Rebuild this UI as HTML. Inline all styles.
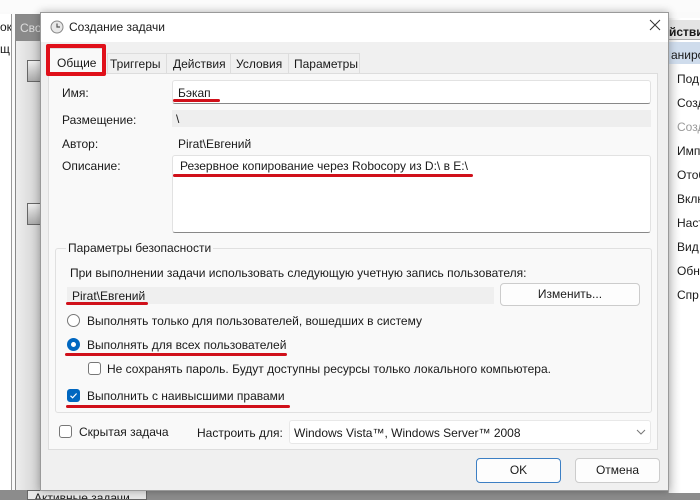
<!DOCTYPE html>
<html><head><meta charset="utf-8"><style>
*{margin:0;padding:0;box-sizing:border-box}
body{width:700px;height:500px;overflow:hidden;background:#fafafa;font-family:"Liberation Sans",sans-serif;font-size:12px;color:#1a1a1a;position:relative}
.a{position:absolute}
.t{position:absolute;white-space:nowrap;line-height:14px}
.red{position:absolute;height:3px;background:#d0101a;border-radius:2px}
.cb{position:absolute;width:13px;height:13px;border:1px solid #777;border-radius:3px;background:#fff}
.rb{position:absolute;width:13px;height:13px;border:1px solid #777;border-radius:50%;background:#fff}
.btn{position:absolute;background:#fdfdfd;border:1px solid #ccc;border-radius:4px;text-align:center}
</style></head><body>
<div class="a" style="left:0;top:0;width:700px;height:12px;background:#fbfbfb"></div>
<div class="a" style="left:0;top:14px;width:12px;height:486px;background:#fff;border-right:1px solid #999;overflow:hidden">
<div class="t" style="left:0;top:6px">ок</div>
<div class="t" style="left:0;top:28px">щ</div>
</div>
<div class="a" style="left:15px;top:14px;width:30px;height:486px;background:linear-gradient(90deg,#eee,#ccc);border:1px solid #888;overflow:hidden">
<div class="a" style="left:0;top:0;width:28px;height:26px;background:#8a8a8a"></div>
<div class="t" style="left:4px;top:6px;color:#ddd">Сво</div>
</div>
<div class="a" style="left:27px;top:60px;width:20px;height:22px;background:linear-gradient(#eee,#aaa);border:1px solid #666"></div>
<div class="a" style="left:27px;top:203px;width:20px;height:22px;background:linear-gradient(#eee,#aaa);border:1px solid #666"></div>
<div class="a" style="left:0;top:490px;width:700px;height:10px;background:#8c8c8c"></div>
<div class="a" style="left:27px;top:490px;width:120px;height:10px;background:#e8e8e8;border:1px solid #666;overflow:hidden">
<div class="t" style="left:6px;top:0">Активные задачи</div>
</div>
<div class="a" style="left:668px;top:18px;width:32px;height:475px;background:linear-gradient(90deg,#eaeaea,#fff 40%);border-left:1px solid #aaa;overflow:hidden">
<div class="a" style="left:0;top:2px;width:32px;height:20px;background:#e4e4e4;border-bottom:1px solid #aaa"></div>
<div class="t" style="left:0;top:7px;font-weight:bold">йствия</div>
<div class="a" style="left:0;top:24px;width:32px;height:22px;background:#cfdcec"></div>
<div class="t" style="left:2px;top:30px">анирование</div>
<div class="t" style="left:8px;top:54px">Под</div>
<div class="t" style="left:8px;top:78px">Созд</div>
<div class="t" style="left:8px;top:102px;color:#999">Созд</div>
<div class="t" style="left:8px;top:126px">Импо</div>
<div class="t" style="left:8px;top:150px">Отоб</div>
<div class="t" style="left:8px;top:174px">Вклю</div>
<div class="t" style="left:8px;top:198px">Наст</div>
<div class="t" style="left:8px;top:222px">Вид</div>
<div class="t" style="left:8px;top:246px">Обно</div>
<div class="t" style="left:8px;top:270px">Спр</div>
</div>

<div class="a" style="left:40px;top:12px;width:629px;height:479px;background:#f0f0f0;border:1px solid #9a9a9a;box-shadow:0 0 8px rgba(0,0,0,.3)"></div>
<div class="a" style="left:41px;top:13px;width:627px;height:29px;background:#fff"></div>
<svg class="a" style="left:50px;top:20px" width="14" height="14"><circle cx="7" cy="7" r="6" fill="#e8e8e8" stroke="#888"/><path d="M7 3.5V7H10" stroke="#555" fill="none" stroke-width="1.2"/></svg>
<div class="t" style="left:69px;top:20px">Создание задачи</div>
<svg class="a" style="left:649px;top:19px" width="12" height="12"><path d="M1 1L11 11M11 1L1 11" stroke="#333" stroke-width="1"/></svg>

<div class="a" style="left:48px;top:73px;width:610px;height:377px;background:#f9f9f9;border:1px solid #ddd"></div>
<div class="a" style="left:49px;top:48px;width:57px;height:27px;background:#f9f9f9;border:1px solid #ddd;border-bottom:none"></div>
<div class="a" style="left:107px;top:53px;width:253px;height:20px;background:#f0f0f0;border:1px solid #ddd;border-bottom:none"></div>
<div class="a" style="left:166px;top:53px;width:1px;height:20px;background:#ddd"></div>
<div class="a" style="left:230px;top:53px;width:1px;height:20px;background:#ddd"></div>
<div class="a" style="left:288px;top:53px;width:1px;height:20px;background:#ddd"></div>
<div class="t" style="left:57px;top:56px">Общие</div>
<div class="t" style="left:110px;top:57px">Триггеры</div>
<div class="t" style="left:173px;top:57px">Действия</div>
<div class="t" style="left:236px;top:57px">Условия</div>
<div class="t" style="left:294px;top:57px">Параметры</div>
<div class="a" style="left:46px;top:44px;width:60px;height:32px;border:4px solid #e0101a;border-radius:2px"></div>

<div class="t" style="left:62px;top:86px">Имя:</div>
<div class="a" style="left:172px;top:80px;width:479px;height:24px;background:#fff;border:1px solid #e2e2e2;border-bottom:1px solid #888;border-radius:3px"></div>
<div class="t" style="left:178px;top:86px">Бэкап</div>
<div class="red" style="left:173px;top:99px;width:47px"></div>
<div class="t" style="left:62px;top:113px">Размещение:</div>
<div class="a" style="left:172px;top:110px;width:479px;height:17px;background:#eeeeee"></div>
<div class="t" style="left:176px;top:112px">\</div>
<div class="t" style="left:62px;top:137px">Автор:</div>
<div class="t" style="left:178px;top:137px">Pirat\Евгений</div>
<div class="t" style="left:62px;top:159px">Описание:</div>
<div class="a" style="left:172px;top:155px;width:479px;height:78px;background:#fff;border:1px solid #e2e2e2;border-bottom:1px solid #888;border-radius:3px"></div>
<div class="t" style="left:180px;top:159px">Резервное копирование через Robocopy из D:\ в E:\</div>
<div class="red" style="left:173px;top:174px;width:300px"></div>

<div class="a" style="left:55px;top:248px;width:597px;height:165px;border:1px solid #e0e0e0;border-radius:3px"></div>
<div class="t" style="left:66px;top:241px;background:#f9f9f9;padding:0 2px">Параметры безопасности</div>
<div class="t" style="left:70px;top:266px">При выполнении задачи использовать следующую учетную запись пользователя:</div>
<div class="a" style="left:67px;top:287px;width:427px;height:17px;background:#efefef"></div>
<div class="t" style="left:72px;top:289px">Pirat\Евгений</div>
<div class="red" style="left:66px;top:302px;width:82px"></div>
<div class="btn" style="left:500px;top:283px;width:140px;height:23px;line-height:21px">Изменить...</div>
<div class="rb" style="left:67px;top:314px"></div>
<div class="t" style="left:87px;top:314px">Выполнять только для пользователей, вошедших в систему</div>
<div class="rb" style="left:67px;top:338px;border:4px solid #0067c0"></div>
<div class="t" style="left:87px;top:338px">Выполнять для всех пользователей</div>
<div class="red" style="left:65px;top:353px;width:222px"></div>
<div class="cb" style="left:88px;top:362px"></div>
<div class="t" style="left:107px;top:362px">Не сохранять пароль. Будут доступны ресурсы только локального компьютера.</div>
<div class="cb" style="left:67px;top:389px;background:#0067c0;border-color:#0067c0"></div>
<svg class="a" style="left:67px;top:389px" width="13" height="13"><path d="M3.5 6.8L5.6 8.8L9.6 4.5" stroke="#fff" fill="none" stroke-width="1.2"/></svg>
<div class="t" style="left:87px;top:389px">Выполнить с наивысшими правами</div>
<div class="red" style="left:66px;top:405px;width:224px"></div>

<div class="cb" style="left:59px;top:425px"></div>
<div class="t" style="left:79px;top:425px">Скрытая задача</div>
<div class="t" style="left:197px;top:426px">Настроить для:</div>
<div class="a" style="left:289px;top:420px;width:362px;height:24px;background:#fff;border:1px solid #e8e8e8;border-radius:3px"></div>
<div class="t" style="left:294px;top:426px">Windows Vista™, Windows Server™ 2008</div>
<svg class="a" style="left:636px;top:429px" width="10" height="6"><path d="M1 1L5 5L9 1" stroke="#777" fill="none"/></svg>

<div class="btn" style="left:476px;top:458px;width:85px;height:25px;line-height:23px;border-color:#3c7fc4">OK</div>
<div class="btn" style="left:575px;top:458px;width:85px;height:25px;line-height:23px">Отмена</div>
</body></html>
